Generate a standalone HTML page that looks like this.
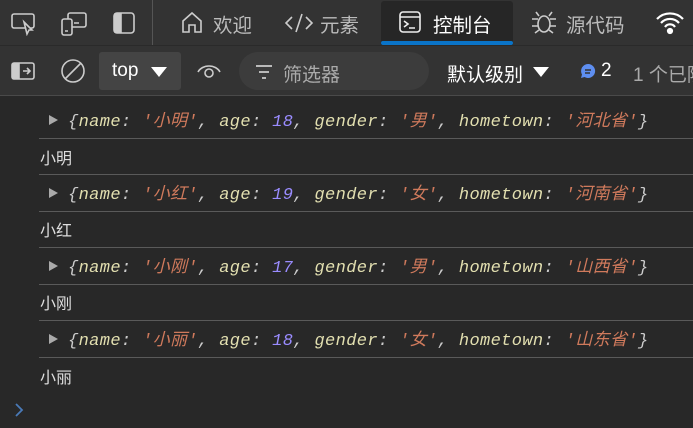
<!DOCTYPE html>
<html><head><meta charset="utf-8"><style>
*{margin:0;padding:0;box-sizing:border-box}
body{width:693px;height:428px;overflow:hidden;background:#282828;font-family:"Liberation Sans","Noto Sans CJK SC",sans-serif;position:relative;color:#ddd}
.bar1{position:absolute;left:0;top:0;width:693px;height:45px;background:#333}
.bar2{position:absolute;left:0;top:45px;width:693px;height:51px;background:#333;border-bottom:1px solid #4a4a4a;border-top:1px solid #2a2a2a}
.a{position:absolute;white-space:nowrap}
.tab{font-size:19.5px;color:#bbb;top:9px}
.row{position:absolute;left:39px;right:0;border-bottom:1px solid #5a5a5a;height:36.5px}
.obj{font-family:"Liberation Mono","Noto Sans CJK SC",monospace;font-style:italic;font-size:17px;letter-spacing:0.38px;color:#ccc;position:absolute;left:68px;white-space:nowrap}
.k{color:#e2dfb0}.s{color:#d07a5c}.n{color:#9a8cff}
.tri{position:absolute;left:49px;width:0;height:0;border-left:9px solid #aaa;border-top:5px solid transparent;border-bottom:5px solid transparent}
.txt{position:absolute;left:40px;font-size:16px;color:#ddd}
</style></head><body>
<div class="bar1"></div>
<div class="bar2"></div>
<svg class="a" style="left:10px;top:12px" width="26" height="24" viewBox="0 0 26 24" fill="none" stroke="#ccc" stroke-width="1.6"><rect x="2" y="2" width="22" height="14" rx="2"/><path d="M14 10l8 8-3 0-2 4z" fill="#333"/></svg>
<svg class="a" style="left:60px;top:11px" width="28" height="26" viewBox="0 0 28 26" fill="none" stroke="#ccc" stroke-width="1.6"><rect x="8" y="2" width="18" height="14" rx="2"/><rect x="2" y="8" width="10" height="16" rx="2" fill="#333"/><path d="M5 20h3M14 12h5"/></svg>
<svg class="a" style="left:112px;top:11px" width="24" height="24" viewBox="0 0 24 24" fill="none" stroke="#ccc" stroke-width="1.6"><rect x="2" y="2" width="20" height="20" rx="3"/><path d="M3 3h6v18H3z" fill="#ccc"/></svg>
<div class="a" style="left:152px;top:0;width:1px;height:45px;background:#555"></div>
<svg class="a" style="left:180px;top:11px" width="24" height="24" viewBox="0 0 24 24" fill="none" stroke="#ccc" stroke-width="1.6"><path d="M3 10l9-8 9 8v11h-6v-7h-6v7H3z"/></svg>
<div class="a tab" style="left:213px">欢迎</div>
<svg class="a" style="left:284px;top:12px" width="30" height="22" viewBox="0 0 30 22" fill="none" stroke="#ccc" stroke-width="1.6"><path d="M8 5l-6 6 6 6M22 5l6 6-6 6M18 2l-6 18"/></svg>
<div class="a tab" style="left:320px">元素</div>
<div class="a" style="left:381px;top:1px;width:132px;height:44px;background:#262626;border-radius:3px 3px 0 0"></div>
<div class="a" style="left:381px;top:41px;width:132px;height:4px;background:#0a74c8;border-radius:2px"></div>
<svg class="a" style="left:398px;top:10px" width="24" height="24" viewBox="0 0 24 24" fill="none" stroke="#eee" stroke-width="1.6"><rect x="2" y="2" width="20" height="20" rx="3"/><path d="M2 7h20M6 11l4 3-4 3M11 18h6"/></svg>
<div class="a tab" style="left:433px;color:#fff">控制台</div>
<svg class="a" style="left:530px;top:9px" width="28" height="26" viewBox="0 0 28 26" fill="none" stroke="#ccc" stroke-width="1.6"><ellipse cx="14" cy="15" rx="6" ry="8"/><path d="M9 7l-3-4M19 7l3-4M2 10h6M20 10h6M2 17h6M20 17h6M5 24l4-3M23 24l-4-3"/></svg>
<div class="a tab" style="left:566px">源代码</div>
<svg class="a" style="left:655px;top:11px" width="30" height="24" viewBox="0 0 30 24" fill="none" stroke="#fff" stroke-width="2.2"><path d="M2 8a18 18 0 0 1 26 0M6 12a12 12 0 0 1 18 0M10 16a6 6 0 0 1 10 0"/><circle cx="15" cy="20" r="2" fill="#fff"/></svg>
<svg class="a" style="left:10px;top:60px" width="26" height="22" viewBox="0 0 26 22" fill="none" stroke="#ccc" stroke-width="1.6"><rect x="2" y="3" width="22" height="16" rx="2"/><path d="M3 4h6v14H3z" fill="#ccc"/><path d="M13 11h7M17 8l3 3-3 3"/></svg>
<svg class="a" style="left:60px;top:58px" width="26" height="26" viewBox="0 0 26 26" fill="none" stroke="#ccc" stroke-width="1.6"><circle cx="13" cy="13" r="11"/><path d="M5 21L21 5"/></svg>
<div class="a" style="left:99px;top:52px;width:82px;height:38px;background:#444;border-radius:3px"></div>
<div class="a" style="left:112px;top:60px;font-size:19px;color:#fff">top</div>
<div class="a" style="left:151px;top:67px;border-left:8px solid transparent;border-right:8px solid transparent;border-top:10px solid #fff"></div>
<svg class="a" style="left:196px;top:60px" width="26" height="20" viewBox="0 0 26 20" fill="none" stroke="#ccc" stroke-width="1.6"><path d="M2 12a12 10 0 0 1 22 0"/><circle cx="13" cy="13" r="4"/></svg>
<div class="a" style="left:239px;top:52px;width:190px;height:38px;background:#3c3c3c;border-radius:19px"></div>
<svg class="a" style="left:255px;top:64px" width="18" height="16" viewBox="0 0 18 16" stroke="#ccc" stroke-width="1.8"><path d="M1 2h16M4 8h10M7 14h4"/></svg>
<div class="a" style="left:283px;top:60px;font-size:19px;color:#aaa">筛选器</div>
<div class="a" style="left:447px;top:60px;font-size:19px;color:#fff">默认级别</div>
<div class="a" style="left:533px;top:67px;border-left:8px solid transparent;border-right:8px solid transparent;border-top:10px solid #fff"></div>
<svg class="a" style="left:579px;top:62px" width="18" height="18" viewBox="0 0 18 18"><path d="M9 2a7 7 0 1 1-3.5 13L2 16l1-3.5A7 7 0 0 1 9 2z" fill="#5e8ef0"/><path d="M6 8h6M6 11h5" stroke="#333" stroke-width="1.4"/></svg>
<div class="a" style="left:601px;top:60px;font-size:19px;color:#fff">2</div>
<div class="a" style="left:633px;top:60px;font-size:19px;color:#aaa">1 个已隐藏</div>
<div class="row" style="top:102px"></div>
<div class="row" style="top:138px"></div>
<div class="row" style="top:175px"></div>
<div class="row" style="top:211px"></div>
<div class="row" style="top:248px"></div>
<div class="row" style="top:284px"></div>
<div class="row" style="top:321px"></div>

<div class="tri" style="top:115px"></div>
<div class="obj" style="top:106px">{<span class="k">name</span>: <span class="s">'小明'</span>, <span class="k">age</span>: <span class="n">18</span>, <span class="k">gender</span>: <span class="s">'男'</span>, <span class="k">hometown</span>: <span class="s">'河北省'</span>}</div>
<div class="txt" style="top:145px">小明</div>
<div class="tri" style="top:188px"></div>
<div class="obj" style="top:179px">{<span class="k">name</span>: <span class="s">'小红'</span>, <span class="k">age</span>: <span class="n">19</span>, <span class="k">gender</span>: <span class="s">'女'</span>, <span class="k">hometown</span>: <span class="s">'河南省'</span>}</div>
<div class="txt" style="top:217px">小红</div>
<div class="tri" style="top:261px"></div>
<div class="obj" style="top:252px">{<span class="k">name</span>: <span class="s">'小刚'</span>, <span class="k">age</span>: <span class="n">17</span>, <span class="k">gender</span>: <span class="s">'男'</span>, <span class="k">hometown</span>: <span class="s">'山西省'</span>}</div>
<div class="txt" style="top:290px">小刚</div>
<div class="tri" style="top:334px"></div>
<div class="obj" style="top:325px">{<span class="k">name</span>: <span class="s">'小丽'</span>, <span class="k">age</span>: <span class="n">18</span>, <span class="k">gender</span>: <span class="s">'女'</span>, <span class="k">hometown</span>: <span class="s">'山东省'</span>}</div>
<div class="txt" style="top:364px">小丽</div>
<svg class="a" style="left:13px;top:402px" width="12" height="16" viewBox="0 0 12 16" fill="none" stroke="#4a7ab8" stroke-width="1.8"><path d="M3 2l6 6-6 6"/></svg>
</body></html>
